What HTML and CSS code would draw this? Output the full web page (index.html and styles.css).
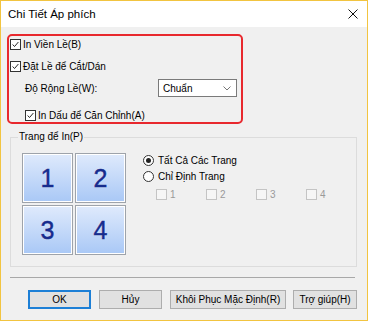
FILE: index.html
```html
<!DOCTYPE html>
<html>
<head>
<meta charset="utf-8">
<link rel="stylesheet" href="styles.css">
</head>
<body>
<div class="win">
  <div class="titlebar">
    <span class="title">Chi Tiết Áp phích</span>
    <svg class="close" width="10" height="10" viewBox="0 0 10 10"><path d="M0.5 0.5 L9.5 9.5 M9.5 0.5 L0.5 9.5" stroke="#111" stroke-width="1" fill="none"/></svg>
  </div>
  <div class="content">
    <div class="hl">
      <div class="row r1"><span class="cb"><svg viewBox="0 0 11 11"><path d="M2 5.5 L4.3 8 L9 2.5" stroke="#222" stroke-width="1.2" fill="none"/></svg></span><span>In Viền Lề(B)</span></div>
      <div class="row r2"><span class="cb"><svg viewBox="0 0 11 11"><path d="M2 5.5 L4.3 8 L9 2.5" stroke="#222" stroke-width="1.2" fill="none"/></svg></span><span>Đặt Lề để Cắt/Dán</span></div>
      <div class="row r3"><span class="lbl">Độ Rộng Lề(W):</span><div class="select"><span>Chuẩn</span><svg class="chev" width="8" height="5" viewBox="0 0 8 5"><path d="M0.5 0.5 L4 4 L7.5 0.5" stroke="#777" stroke-width="1" fill="none"/></svg></div></div>
      <div class="row r4"><span class="cb"><svg viewBox="0 0 11 11"><path d="M2 5.5 L4.3 8 L9 2.5" stroke="#222" stroke-width="1.2" fill="none"/></svg></span><span>In Dấu để Căn Chỉnh(A)</span></div>
    </div>
    <div class="group">
      <span class="legend">Trang để In(P)</span>
      <div class="tiles">
        <div class="tile">1</div>
        <div class="tile">2</div>
        <div class="tile">3</div>
        <div class="tile">4</div>
      </div>
      <div class="opts">
        <div class="radio-row"><span class="radio on"></span><span>Tất Cả Các Trang</span></div>
        <div class="radio-row second"><span class="radio"></span><span>Chỉ Định Trang</span></div>
        <div class="pages">
          <div class="page"><span class="dcb"></span><span>1</span></div>
          <div class="page"><span class="dcb"></span><span>2</span></div>
          <div class="page"><span class="dcb"></span><span>3</span></div>
          <div class="page"><span class="dcb"></span><span>4</span></div>
        </div>
      </div>
    </div>
    <div class="sep"></div>
    <div class="buttons">
      <div class="btn default w63">OK</div>
      <div class="btn w63">Hủy</div>
      <div class="btn w116">Khôi Phục Mặc Định(R)</div>
      <div class="btn w64">Trợ giúp(H)</div>
    </div>
  </div>
</div>
</body>
</html>
```
FILE: styles.css
```css
html, body {
  margin: 0;
  padding: 0;
}
body {
  width: 368px;
  height: 321px;
  overflow: hidden;
  font-family: "Liberation Sans", Arial, sans-serif;
  font-size: 10px;
  color: #000;
}
.win {
  box-sizing: border-box;
  width: 368px;
  height: 321px;
  border: 1px solid #f2c440;
  background: #f0f0f0;
  display: flex;
  flex-direction: column;
}
.titlebar {
  height: 26px;
  background: #fff;
  display: flex;
  align-items: center;
  justify-content: space-between;
  padding: 0 9px 0 7px;
}
.title {
  font-size: 11.5px;
  color: #000;
}
.close {
  display: block;
  margin-top: -1px;
}
.content {
  flex: 1;
  display: flex;
  flex-direction: column;
}
.hl {
  box-sizing: border-box;
  margin: 7px 0 0 6px;
  width: 236px;
  height: 90px;
  border: 2px solid #e8282e;
  border-radius: 5px;
  display: flex;
  flex-direction: column;
}
.row {
  display: flex;
  align-items: center;
}
.r1 { height: 16px; padding-left: 1px; }
.r2 { height: 16px; margin-top: 6px; padding-left: 1px; }
.r3 { height: 18px; margin-top: 5px; padding-left: 16px; }
.r4 { height: 14px; margin-top: 11px; padding-left: 16px; }
.cb {
  box-sizing: border-box;
  width: 11px;
  height: 11px;
  border: 1px solid #333;
  background: #fff;
  margin-right: 2px;
  display: flex;
}
.cb svg {
  width: 9px;
  height: 9px;
}
.lbl {
  width: 133px;
}
.select {
  box-sizing: border-box;
  width: 79px;
  height: 18px;
  border: 1px solid #7a7a7a;
  background: #fff;
  display: flex;
  align-items: center;
  justify-content: space-between;
  padding: 0 5px 0 4px;
}
.chev {
  display: block;
}
.group {
  position: relative;
  box-sizing: border-box;
  margin: 13px 0 0 9px;
  width: 347px;
  height: 130px;
  border: 1px solid #dcdcdc;
  padding: 15px 0 0 11px;
  display: flex;
  align-items: flex-start;
}
.legend {
  position: absolute;
  left: 7px;
  top: -8px;
  line-height: 14px;
  padding: 0 1px;
  background: #f0f0f0;
}
.tiles {
  display: grid;
  grid-template-columns: 51px 51px;
  grid-template-rows: 50px 50px;
  gap: 2px;
}
.tile {
  box-sizing: border-box;
  border: 1px solid #9ea3aa;
  box-shadow: inset 0 0 0 1px #fff;
  background: linear-gradient(#dfeafc, #a9c8f6);
  display: flex;
  align-items: center;
  justify-content: center;
  font-size: 25px;
  color: #162c8e;
  -webkit-text-stroke: 0.5px #162c8e;
  text-shadow: 0 0 1px #fff, 0 0 1px #fff;
}
.opts {
  margin-left: 17px;
  display: flex;
  flex-direction: column;
}
.radio-row {
  height: 14px;
  display: flex;
  align-items: center;
}
.radio-row.second {
  margin-top: 2px;
}
.radio {
  box-sizing: border-box;
  width: 11px;
  height: 11px;
  border: 1px solid #333;
  border-radius: 50%;
  background: #fff;
  margin-right: 4px;
  display: flex;
  align-items: center;
  justify-content: center;
}
.radio.on::after {
  content: "";
  width: 5px;
  height: 5px;
  border-radius: 50%;
  background: #222;
}
.pages {
  display: flex;
  margin: 6px 0 0 13px;
  color: #9a9a9a;
}
.page {
  width: 50px;
  height: 11px;
  display: flex;
  align-items: center;
}
.dcb {
  box-sizing: border-box;
  width: 11px;
  height: 11px;
  border: 1px solid #c4c4c4;
  background: #f6f6f6;
  margin-right: 3px;
}
.sep {
  margin: 10px 0 0 9px;
  width: 345px;
  height: 1px;
  background: #a8a8a8;
}
.buttons {
  display: flex;
  margin: 12px 0 0 27px;
}
.btn {
  box-sizing: border-box;
  height: 19px;
  border: 1px solid #adadad;
  background: #e1e1e1;
  display: flex;
  align-items: center;
  justify-content: center;
  margin-right: 8px;
}
.btn.default {
  border: 2px solid #1c7fd6;
}
.w63 { width: 63px; }
.w64 { width: 64px; }
.w116 { width: 116px; margin-right: 7px; }
```
